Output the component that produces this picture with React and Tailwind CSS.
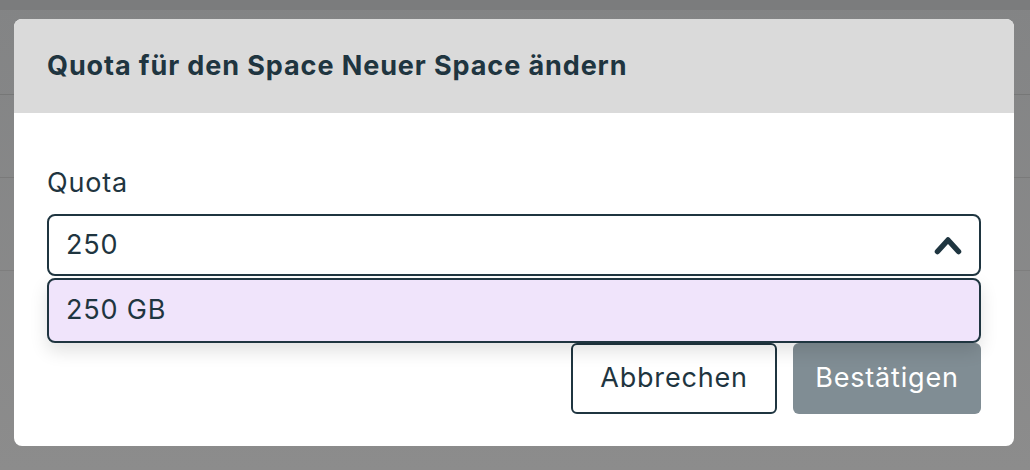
export default function App() {
  return (
    <div
      className="relative w-[1030px] h-[470px] overflow-hidden bg-gradient-to-b from-[#838485] to-[#8c8c8c]"
      style={{ fontFamily: "Inter, 'Open Sans', sans-serif" }}
    >
      {/* page behind the overlay */}
      <div className="flex flex-col">
        <div className="h-[10px] bg-[#7b7c7d]" />
        <div className="h-[85px] border-b border-[#767777]" />
        <div className="h-[83px] border-b border-[#7a7a7a]" />
        <div className="h-[93px] border-b border-[#7e7e7e]" />
      </div>

      {/* modal */}
      <div className="absolute left-[14px] top-[19px] w-[1000px] h-[427px] bg-white rounded-[8px] text-[#1f3540] tracking-[0.8px]">
        <div className="h-[94px] bg-[#dadada] rounded-t-[8px] px-[33px] flex items-center">
          <h2 className="text-[27px] font-bold tracking-[0.9px]">
            Quota für den Space Neuer Space ändern
          </h2>
        </div>

        <div className="px-[33px] pt-[50px]">
          <div className="text-[27px] leading-[40px] mb-[11px]">Quota</div>

          <div className="relative">
            <div className="h-[62px] border-2 border-[#1f3540] rounded-[8px] flex items-center justify-between pl-[17px] pr-[16px]">
              <span className="text-[27px]">250</span>
              <svg width="30" height="22" viewBox="0 0 30 22" fill="none">
                <polyline
                  points="4.5,17.5 15,6 25.5,17.5"
                  stroke="#1f3540"
                  strokeWidth="5.5"
                  strokeLinecap="round"
                  strokeLinejoin="round"
                />
              </svg>
            </div>

            {/* options menu */}
            <div className="absolute left-0 right-0 top-full mt-[2px] z-10 h-[65px] bg-[#f0e4fb] border-2 border-[#1f3540] rounded-[8px] shadow-[0_8px_18px_rgba(0,0,0,0.12)] flex items-center pl-[17px]">
              <span className="text-[27px]">250 GB</span>
            </div>
          </div>

          <div className="mt-[67px] flex justify-end gap-[16px]">
            <button className="h-[71px] w-[206px] border-2 border-[#1f3540] rounded-[6px] bg-white text-[27px] text-[#1f3540]">
              Abbrechen
            </button>
            <button className="h-[71px] w-[188px] rounded-[6px] bg-[#808d94] text-[27px] text-white">
              Bestätigen
            </button>
          </div>
        </div>
      </div>
    </div>
  );
}
